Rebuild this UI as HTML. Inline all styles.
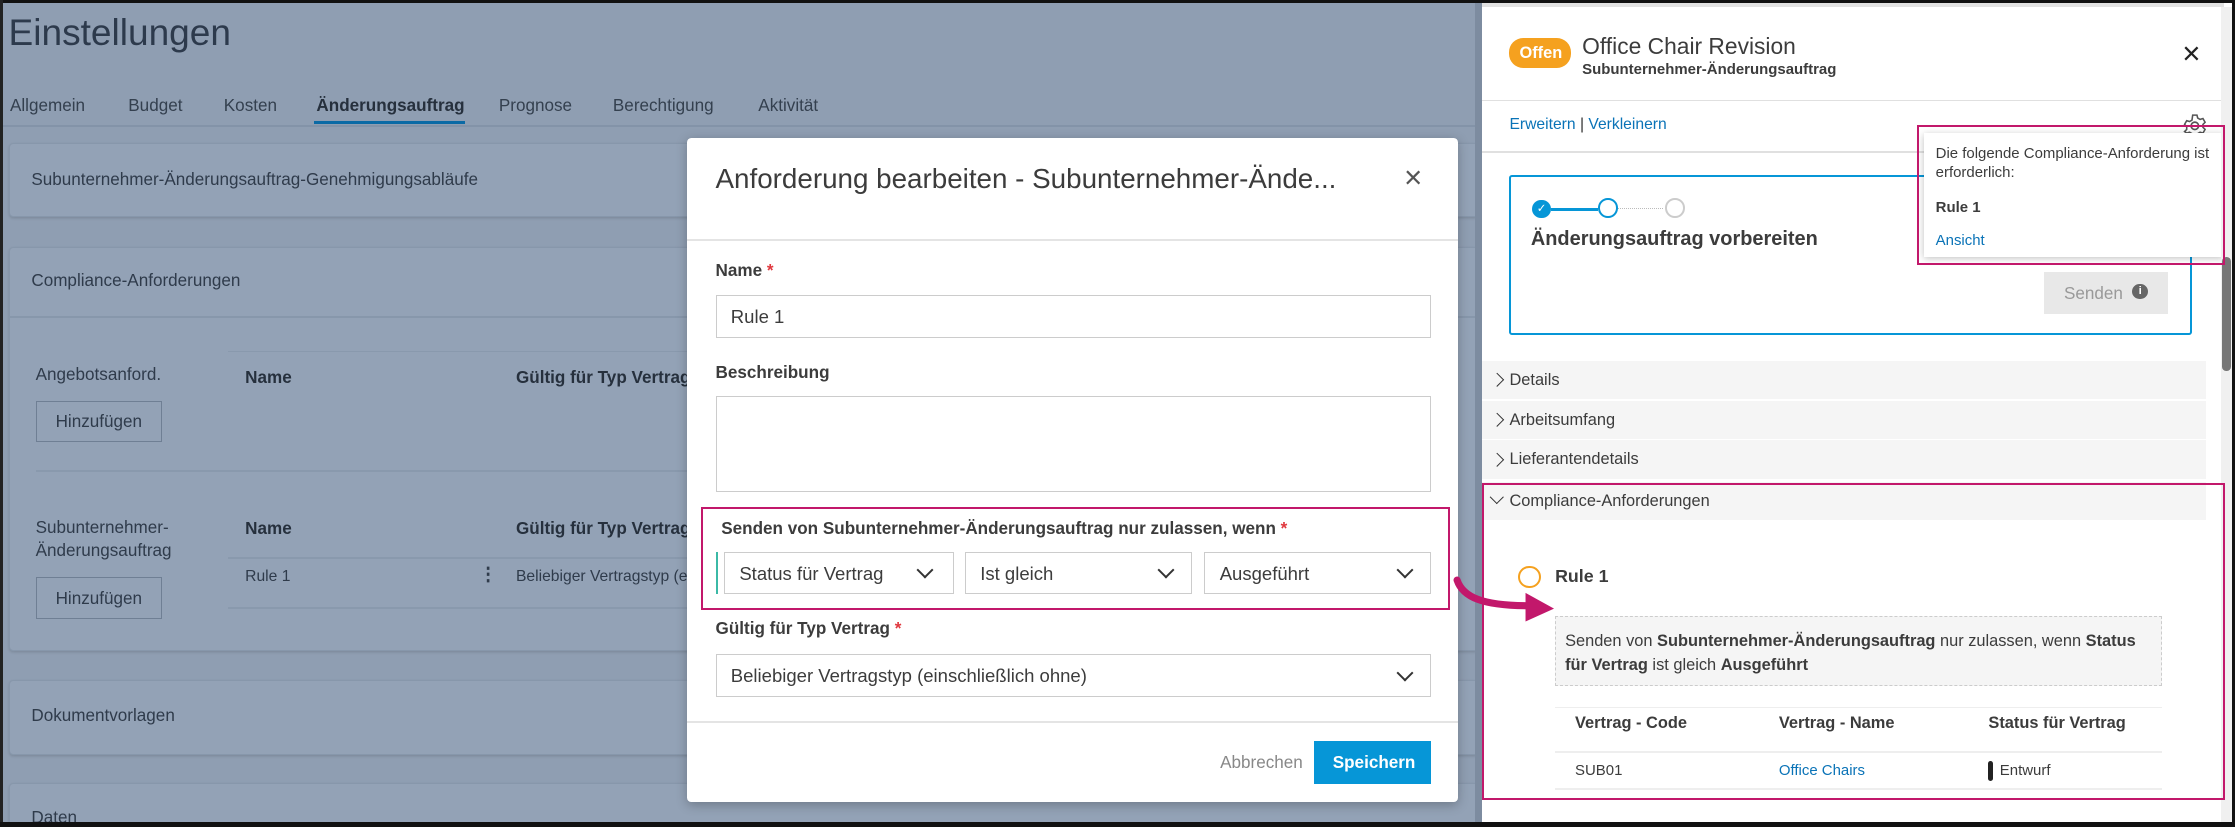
<!DOCTYPE html>
<html><head><meta charset="utf-8"><style>
html,body{margin:0;padding:0;width:2235px;height:827px;overflow:hidden;background:#000}
#w{zoom:1.42538;width:1568px;height:580px;position:relative;overflow:hidden;font-family:"Liberation Sans",sans-serif;color:#3c3c3c}
.a{position:absolute}
.t{position:absolute;white-space:nowrap;font-size:12px;line-height:14px}
.card{position:absolute;background:#93a2b6;border:1px solid #8797ab;border-radius:3px;box-shadow:0 1px 2px rgba(0,0,0,.12)}
.b{font-weight:bold}
.sel{position:absolute;background:#fff;border:1px solid #ccc;box-sizing:border-box;font-size:13px;color:#3c3c3c}
.sel span{position:absolute;left:10px;top:7px}
.chev{position:absolute;width:7px;height:7px;border-right:1.5px solid #333;border-bottom:1.5px solid #333;transform:rotate(45deg)}
.acc{position:absolute;left:1040px;width:508px;height:27px;background:#f5f5f5}
.acc .t{left:19px;top:7px;font-size:11.5px}
.ar{position:absolute;left:7px;top:10px;width:6px;height:6px;border-right:1.3px solid #333;border-bottom:1.3px solid #333;transform:rotate(-45deg)}
.pink{position:absolute;border:2px solid #c2186b;box-sizing:border-box}
</style></head><body><div id="w">
<div class="a" style="left:0;top:0;width:1040px;height:580px;background:#8f9eb2"></div>
<div class="t" style="left:6px;top:8px;font-size:26px;line-height:30px;color:#2d3a4c">Einstellungen</div>
<div class="t" style="left:7px;top:67px;font-size:12px;color:#34404f">Allgemein</div>
<div class="t" style="left:90px;top:67px;font-size:12px;color:#34404f">Budget</div>
<div class="t" style="left:157px;top:67px;font-size:12px;color:#34404f">Kosten</div>
<div class="t b" style="left:222px;top:67px;font-size:12px;color:#26303d">Änderungsauftrag</div>
<div class="t" style="left:350px;top:67px;font-size:12px;color:#34404f">Prognose</div>
<div class="t" style="left:430px;top:67px;font-size:12px;color:#34404f">Berechtigung</div>
<div class="t" style="left:532px;top:67px;font-size:12px;color:#34404f">Aktivität</div>
<div class="a" style="left:2px;top:88px;width:1035px;height:1px;background:#8393a8"></div>
<div class="a" style="left:220px;top:85px;width:106px;height:2px;background:#0b6aa5"></div>
<div class="card" style="left:6px;top:100px;width:1030px;height:51px"></div>
<div class="t" style="left:22px;top:119px;font-size:12px;color:#2f3b4b">Subunternehmer-Änderungsauftrag-Genehmigungsabläufe</div>
<div class="card" style="left:6px;top:173px;width:1030px;height:282px"></div>
<div class="a" style="left:7px;top:222px;width:1029px;height:1px;background:#8797ab"></div>
<div class="t" style="left:22px;top:190px;font-size:12px;color:#2f3b4b">Compliance-Anforderungen</div>
<div class="t" style="left:25px;top:256px;font-size:12px;color:#2f3b4b">Angebotsanford.</div>
<div class="a" style="left:25px;top:281px;width:89px;height:29px;border:1px solid #6f7f94;box-sizing:border-box"></div>
<div class="t" style="left:39px;top:289px;font-size:12px;color:#2f3b4b">Hinzufügen</div>
<div class="t b" style="left:172px;top:258px;color:#26303d">Name</div>
<div class="t b" style="left:362px;top:258px;color:#26303d">Gültig für Typ Vertrag</div>
<div class="a" style="left:160px;top:246px;width:330px;height:1px;background:#8999ad"></div>
<div class="a" style="left:25px;top:330px;width:465px;height:1px;background:#8999ad"></div>
<div class="t" style="left:25px;top:363px;font-size:12px;line-height:16px;color:#2f3b4b">Subunternehmer-<br>Änderungsauftrag</div>
<div class="t b" style="left:172px;top:364px;color:#26303d">Name</div>
<div class="t b" style="left:362px;top:364px;color:#26303d">Gültig für Typ Vertrag</div>
<div class="a" style="left:160px;top:391px;width:330px;height:1px;background:#8999ad"></div>
<div class="a" style="left:160px;top:426px;width:330px;height:1px;background:#8999ad"></div>
<div class="t" style="left:172px;top:398px;font-size:11px;color:#2f3b4b">Rule 1</div>
<div class="t b" style="left:336px;top:396px;font-size:13px;color:#2f3b4b">⋮</div>
<div class="t" style="left:362px;top:398px;font-size:11px;color:#2f3b4b">Beliebiger Vertragstyp (ei</div>
<div class="a" style="left:25px;top:405px;width:89px;height:29px;border:1px solid #6f7f94;box-sizing:border-box"></div>
<div class="t" style="left:39px;top:413px;font-size:12px;color:#2f3b4b">Hinzufügen</div>
<div class="card" style="left:6px;top:477px;width:1030px;height:51px"></div>
<div class="t" style="left:22px;top:495px;font-size:12px;color:#2f3b4b">Dokumentvorlagen</div>
<div class="card" style="left:6px;top:549px;width:1030px;height:40px"></div>
<div class="t" style="left:22px;top:567px;font-size:12px;color:#2f3b4b">Daten</div>
<!-- modal -->
<div class="a" style="left:482px;top:97px;width:541px;height:466px;background:#fff;border-radius:3px;box-shadow:0 2px 8px rgba(0,0,0,.25)"></div>
<div class="t" style="left:502px;top:114px;font-size:19.5px;line-height:24px;color:#3c3c3c">Anforderung bearbeiten - Subunternehmer-Ände...</div>
<div class="t" style="left:985px;top:113px;font-size:22px;line-height:24px;color:#555">×</div>
<div class="a" style="left:482px;top:168px;width:541px;height:1px;background:#e4e4e4"></div>
<div class="t b" style="left:502px;top:183px;color:#3c3c3c">Name <span style="color:#e0383e">*</span></div>
<div class="sel" style="left:502px;top:207px;width:502px;height:30px"><span>Rule 1</span></div>
<div class="t b" style="left:502px;top:255px;color:#3c3c3c">Beschreibung</div>
<div class="sel" style="left:502px;top:278px;width:502px;height:67px"></div>
<div class="t b" style="left:506px;top:364px;color:#3c3c3c">Senden von Subunternehmer-Änderungsauftrag nur zulassen, wenn <span style="color:#e0383e">*</span></div>
<div class="a" style="left:502px;top:387px;width:2px;height:30px;background:#3bb9a6"></div>
<div class="sel" style="left:508px;top:387px;width:161px;height:30px"><span>Status für Vertrag</span><i class="chev" style="left:136px;top:8px"></i></div>
<div class="sel" style="left:677px;top:387px;width:159px;height:30px"><span>Ist gleich</span><i class="chev" style="left:136px;top:8px"></i></div>
<div class="sel" style="left:845px;top:387px;width:159px;height:30px"><span>Ausgeführt</span><i class="chev" style="left:136px;top:8px"></i></div>
<div class="pink" style="left:492px;top:356px;width:525px;height:72px"></div>
<div class="t b" style="left:502px;top:434px;color:#3c3c3c">Gültig für Typ Vertrag <span style="color:#e0383e">*</span></div>
<div class="sel" style="left:502px;top:459px;width:502px;height:30px"><span>Beliebiger Vertragstyp (einschließlich ohne)</span><i class="chev" style="left:479px;top:8px"></i></div>
<div class="a" style="left:482px;top:506px;width:541px;height:1px;background:#e4e4e4"></div>
<div class="t" style="left:856px;top:528px;color:#888">Abbrechen</div>
<div class="a" style="left:922px;top:520px;width:82px;height:30px;background:#0696d7"></div>
<div class="t b" style="left:935px;top:528px;color:#fff">Speichern</div>
<!-- right panel -->
<div class="a" style="left:1035px;top:2px;width:5px;height:578px;background:#7d8ca0"></div>
<div class="a" style="left:1040px;top:2px;width:528px;height:575px;background:#fff"></div>
<div class="a" style="left:1040px;top:2px;width:520px;height:3px;background:#e2e2e2"></div>
<div class="a" style="left:1059px;top:27px;width:43px;height:21px;background:#f5a11f;border-radius:10px"></div>
<div class="t b" style="left:1066px;top:31px;color:#fff;font-size:11.5px">Offen</div>
<div class="t" style="left:1110px;top:24px;font-size:16px;line-height:18px;color:#3c3c3c">Office Chair Revision</div>
<div class="t b" style="left:1110px;top:42px;font-size:10.5px;color:#3c3c3c">Subunternehmer-Änderungsauftrag</div>
<div class="t" style="left:1531px;top:26px;font-size:22px;line-height:24px;color:#222">×</div>
<div class="a" style="left:1040px;top:70px;width:520px;height:1px;background:#e0e0e0"></div>
<div class="t" style="left:1059px;top:81px;font-size:11px;color:#0a73b7">Erweitern <span style="color:#333">|</span> Verkleinern</div>
<svg class="a" style="left:1531px;top:79px" width="18" height="18" viewBox="0 0 18 18"><circle cx="9" cy="9" r="2.6" fill="none" stroke="#555" stroke-width="1.2"/><path d="M7.5 1.5h3l.5 2 1.7 1 2-.6 1.5 2.6-1.5 1.5v2l1.5 1.5-1.5 2.6-2-.6-1.7 1-.5 2h-3l-.5-2-1.7-1-2 .6L1.8 13l1.5-1.5v-2L1.8 8l1.5-2.6 2 .6 1.7-1z" fill="none" stroke="#555" stroke-width="1.1"/></svg>
<div class="a" style="left:1040px;top:106px;width:520px;height:1px;background:#e0e0e0"></div>
<div class="a" style="left:1059px;top:123px;width:479px;height:112px;border:2px solid #0696d7;box-sizing:border-box;border-radius:2px"></div>
<div class="a" style="left:1075px;top:140px;width:13px;height:13px;border-radius:50%;background:#0696d7;color:#fff;font-size:8px;line-height:13px;text-align:center">✓</div>
<div class="a" style="left:1088px;top:146px;width:33px;height:2px;background:#0696d7"></div>
<div class="a" style="left:1121px;top:139px;width:11px;height:11px;border-radius:50%;border:2px solid #0696d7"></div>
<div class="a" style="left:1135px;top:146px;width:32px;border-top:1px dotted #bbb"></div>
<div class="a" style="left:1168px;top:139px;width:11px;height:11px;border-radius:50%;border:1.5px solid #ccc"></div>
<div class="t b" style="left:1074px;top:159px;font-size:14px;line-height:17px;color:#3c3c3c">Änderungsauftrag vorbereiten</div>
<div class="a" style="left:1434px;top:191px;width:87px;height:29px;background:#e8e8e8"></div>
<div class="t" style="left:1448px;top:199px;color:#999">Senden</div>
<div class="a" style="left:1496px;top:199px;width:11px;height:11px;border-radius:50%;background:#666;color:#fff;font-size:8px;line-height:11px;text-align:center;font-weight:bold">i</div>
<div class="a" style="left:1350px;top:93px;width:210px;height:87px;background:#fff;box-shadow:0 1px 5px rgba(0,0,0,.25)"></div>
<div class="t" style="left:1358px;top:102px;font-size:10.5px;line-height:13px;color:#3c3c3c">Die folgende Compliance-Anforderung ist<br>erforderlich:</div>
<div class="t b" style="left:1358px;top:139px;font-size:10.5px;color:#3c3c3c">Rule 1</div>
<div class="t" style="left:1358px;top:162px;font-size:10.5px;color:#0a73b7">Ansicht</div>
<div class="acc" style="top:253px"><i class="ar"></i><span class="t">Details</span></div>
<div class="acc" style="top:281px"><i class="ar"></i><span class="t">Arbeitsumfang</span></div>
<div class="acc" style="top:309px"><i class="ar"></i><span class="t">Lieferantendetails</span></div>
<div class="acc" style="top:338px"><i class="ar" style="transform:rotate(45deg);top:7px"></i><span class="t">Compliance-Anforderungen</span></div>
<div class="a" style="left:1065px;top:397px;width:13px;height:13px;border-radius:50%;border:2px solid #f5a11f"></div>
<div class="t b" style="left:1091px;top:398px;font-size:12.5px;color:#3c3c3c">Rule 1</div>
<div class="a" style="left:1091px;top:432px;width:426px;height:49px;background:#f5f5f5;border:1px dashed #ccc;box-sizing:border-box"></div>
<div class="t" style="left:1098px;top:441px;font-size:11.5px;line-height:17px;color:#3c3c3c">Senden von <b>Subunternehmer-Änderungsauftrag</b> nur zulassen, wenn <b>Status</b><br><b>für Vertrag</b> ist gleich <b>Ausgeführt</b></div>
<div class="a" style="left:1091px;top:496px;width:426px;height:1px;background:#eee"></div>
<div class="t b" style="left:1105px;top:501px;font-size:11.5px;color:#3c3c3c">Vertrag - Code</div>
<div class="t b" style="left:1248px;top:501px;font-size:11.5px;color:#3c3c3c">Vertrag - Name</div>
<div class="t b" style="left:1395px;top:501px;font-size:11.5px;color:#3c3c3c">Status für Vertrag</div>
<div class="a" style="left:1091px;top:527px;width:426px;height:1px;background:#eee"></div>
<div class="t" style="left:1105px;top:534px;font-size:10.5px;color:#3c3c3c">SUB01</div>
<div class="t" style="left:1248px;top:534px;font-size:10.5px;color:#0a73b7">Office Chairs</div>
<div class="a" style="left:1395px;top:534px;width:3px;height:14px;background:#222;border-radius:2px"></div>
<div class="t" style="left:1403px;top:534px;font-size:10.5px;color:#3c3c3c">Entwurf</div>
<div class="a" style="left:1091px;top:553px;width:426px;height:1px;background:#eee"></div>
<div class="a" style="left:1558px;top:5px;width:8px;height:572px;background:#f0f0f0"></div>
<div class="a" style="left:1559px;top:180px;width:6px;height:80px;background:#777;border-radius:3px"></div>
<!-- overlays -->
<div class="pink" style="left:1345px;top:88px;width:216px;height:98px"></div>
<div class="pink" style="left:1040px;top:339px;width:521px;height:222px"></div>
<svg class="a" style="left:1010px;top:395px" width="90" height="45"><path d="M12 12 C16 24 30 30 62 30" stroke="#c2186b" stroke-width="5" fill="none" stroke-linecap="round"/><path d="M60 21 L80 32 L60 41 Z" fill="#c2186b"/></svg>
<div class="a" style="left:0;top:0;width:1568px;height:2px;background:#111"></div>
<div class="a" style="left:0;top:0;width:2px;height:580px;background:#222"></div>
<div class="a" style="left:0;top:577px;width:1568px;height:3px;background:#111"></div>
<div class="a" style="left:1566px;top:0;width:2px;height:580px;background:#111"></div>
</div></body></html>
